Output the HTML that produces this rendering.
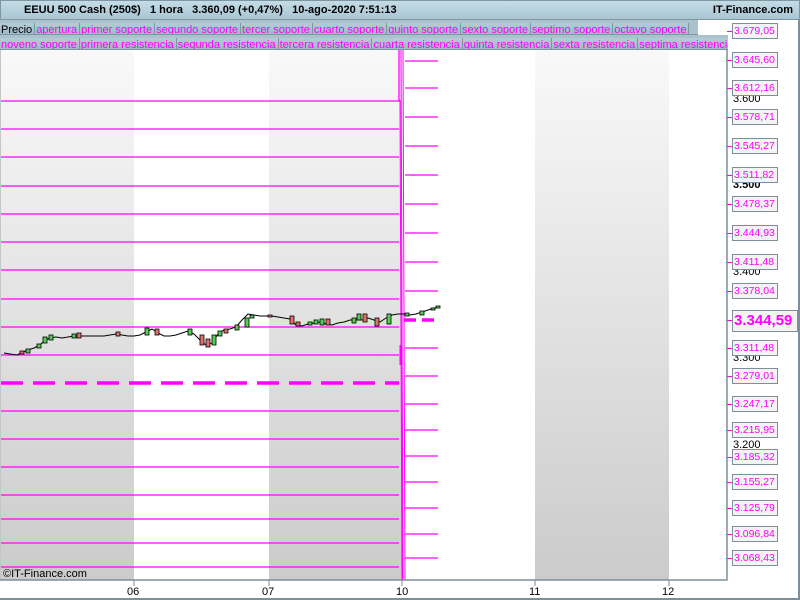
<!DOCTYPE html>
<html><head><meta charset="utf-8"><style>
*{margin:0;padding:0;box-sizing:border-box}
body{width:800px;height:600px;overflow:hidden;background:#fff;font-family:"Liberation Sans",sans-serif;position:relative}
#hdr{position:absolute;left:0;top:0;width:800px;height:20px;background:linear-gradient(#c4dce6,#a9c6d3);border:1px solid #7f96a2;font-size:11px;font-weight:bold;line-height:18px;white-space:pre}
.row{position:absolute;left:0;width:728px;height:15px;background:#a9c2cd;border-bottom:1px solid #7f96a2;white-space:nowrap;overflow:hidden}
.row span{display:inline-block;height:14px;line-height:14px;font-size:11px;color:#f0f;padding:0 2px 0 1px;border-right:1px solid #7f96a2;background:linear-gradient(#b4ccd6,#9ab6c3)}
.lab{position:absolute;left:732px;width:46px;height:16px;border:1px solid #7f8f99;background:#f4f4f4;color:#f0f;font-size:10.5px;line-height:14px;padding-left:1px;white-space:nowrap}
.blk{position:absolute;left:733px;font-size:11px;color:#000;line-height:12px}
.tk{position:absolute;left:727px;width:5px;height:1px;background:#f0f}
.xl{position:absolute;top:586px;font-size:11px;color:#000}
</style></head><body>
<svg width="800" height="600" style="position:absolute;left:0;top:0">
<defs><linearGradient id="g" x1="0" y1="0" x2="0" y2="1"><stop offset="0" stop-color="#f9f9f9"/><stop offset="1" stop-color="#cbcbcb"/></linearGradient></defs>
<rect x="1" y="48" width="133" height="532" fill="url(#g)"/>
<rect x="269" y="48" width="133" height="532" fill="url(#g)"/>
<rect x="535" y="48" width="134" height="532" fill="url(#g)"/>
<g stroke="#f0f" stroke-width="1.3" fill="none">
<path d="M1 101H399V50M1 129H399M1 157H399M1 186H399M1 214H399M1 242H399M1 270H399M1 299H399M1 327H399M1 355H399M1 411H399M1 439H399M1 467H399M1 495H399M1 519H399M1 543H399M1 567H399"/>
<path d="M405 61H438M405 88H438M405 117H438M405 146H438M405 175H438M405 204H438M405 233H438M405 262H438M405 291H438M405 348H438M405 376H438M405 404H438M405 430H438M405 456H438M405 482H438M405 508H438M405 534H438M405 558H438"/>
<path d="M401 50L403 580M403 50L405 580M400 100L402 580" stroke-width="1"/>
</g>
<path d="M1 383H399" stroke="#f0f" stroke-width="3.5" stroke-dasharray="22,10"/>
<path d="M404 320H438" stroke="#f0f" stroke-width="3.5" stroke-dasharray="12,6"/>
<path d="M401 345V365" stroke="#f0f" stroke-width="3"/>
<path d="M0 580H727V48" stroke="#7f8f99" stroke-width="1.5" fill="none"/>
<path d="M0 20V580" stroke="#7f8f99"/>
<g stroke="#7f8f99"><path d="M134 580v6M269 580v6M402 580v6M535 580v6M669 580v6"/></g>
<polyline fill="none" stroke="#000" stroke-width="1" points="4,353 10,354 17,355 23,352 28,350 34,348 40,345 45,340 50,338 56,337 62,338 68,337 74,336 80,336 86,336 92,336 98,336 104,336 110,335 116,334 122,335 128,336 134,336 140,335 146,332 152,329 158,333 164,336 170,336 176,335 182,333 188,331 194,334 200,340 206,345 212,343 218,334 224,330 230,329 236,327 242,320 248,314 254,315 260,316 266,316 272,316 278,317 284,318 290,319 296,325 302,326 308,324 314,323 320,322 326,324 332,325 338,323 344,322 350,320 356,320 362,320 368,318 374,320 380,322 386,318 392,315 398,314 404,314 410,315 416,314 422,312 428,310 434,308 440,307"/>
<g stroke="#000" stroke-width="0.8">
<rect x="20" y="351" width="4" height="3" fill="#e07070"/><rect x="26" y="349" width="4" height="4" fill="#5c5"/><rect x="37" y="344" width="4" height="4" fill="#5c5"/><rect x="43" y="337" width="4" height="6" fill="#5c5"/><rect x="49" y="335" width="4" height="5" fill="#5c5"/><rect x="72" y="334" width="4" height="4" fill="#5c5"/><rect x="77" y="333" width="4" height="5" fill="#e07070"/><rect x="116" y="332" width="4" height="4" fill="#e07070"/><rect x="145" y="328" width="4" height="7" fill="#5c5"/><rect x="155" y="329" width="4" height="6" fill="#e07070"/><rect x="188" y="329" width="4" height="6" fill="#5c5"/><rect x="200" y="335" width="4" height="10" fill="#e07070"/><rect x="206" y="339" width="4" height="8" fill="#e07070"/><rect x="212" y="335" width="4" height="10" fill="#5c5"/><rect x="218" y="331" width="4" height="5" fill="#5c5"/><rect x="224" y="329" width="4" height="4" fill="#e07070"/><rect x="235" y="325" width="4" height="5" fill="#5c5"/><rect x="245" y="318" width="4" height="9" fill="#5c5"/><rect x="250" y="315" width="4" height="3" fill="#5c5"/><rect x="268" y="315" width="4" height="2" fill="#e07070"/><rect x="290" y="316" width="4" height="8" fill="#e07070"/><rect x="296" y="322" width="4" height="4" fill="#e07070"/><rect x="308" y="322" width="4" height="3" fill="#5c5"/><rect x="314" y="320" width="4" height="4" fill="#5c5"/><rect x="320" y="319" width="4" height="6" fill="#5c5"/><rect x="326" y="319" width="4" height="6" fill="#e07070"/><rect x="352" y="318" width="4" height="5" fill="#5c5"/><rect x="357" y="314" width="4" height="6" fill="#5c5"/><rect x="363" y="314" width="4" height="8" fill="#e07070"/><rect x="375" y="318" width="4" height="8" fill="#e07070"/><rect x="387" y="314" width="4" height="10" fill="#5c5"/><rect x="405" y="313" width="4" height="3" fill="#5c5"/><rect x="420" y="311" width="4" height="4" fill="#5c5"/><rect x="431" y="308" width="4" height="2" fill="#5c5"/><rect x="436" y="306" width="4" height="2" fill="#5c5"/>
</g>
<rect x="6" y="8" width="5" height="7" fill="#e06060" stroke="#444" stroke-width=".6"/><rect x="13" y="3" width="5" height="9" fill="#5c5" stroke="#444" stroke-width=".6"/>
</svg>
<div id="hdr"><span style="position:absolute;left:23px">EEUU 500 Cash (250$)   1 hora   3.360,09 (+0,47%)   10-ago-2020 7:51:13</span><span style="position:absolute;right:6px">IT-Finance.com</span></div>
<div class="row" style="top:20px;width:698px"><span style="color:#000">Precio</span><span>apertura</span><span>primer soporte</span><span>segundo soporte</span><span>tercer soporte</span><span>cuarto soporte</span><span>quinto soporte</span><span>sexto soporte</span><span>septimo soporte</span><span>octavo soporte</span></div>
<div class="row" style="top:35px"><span>noveno soporte</span><span>primera resistencia</span><span>segunda resistencia</span><span>tercera resistencia</span><span>cuarta resistencia</span><span>quinta resistencia</span><span>sexta resistencia</span><span>septima resistencia</span></div>
<div style="position:absolute;left:3px;top:568px;font-size:11px">©IT-Finance.com</div>
<div class="blk" style="top:93px">3.600</div><div class="blk" style="top:179px;font-weight:bold">3.500</div><div class="blk" style="top:266px">3.400</div><div class="blk" style="top:352px">3.300</div><div class="blk" style="top:439px">3.200</div>
<div class="tk" style="top:31px"></div><div class="lab" style="top:23px">3.679,05</div>
<div class="tk" style="top:60px"></div><div class="lab" style="top:52px">3.645,60</div>
<div class="tk" style="top:88px"></div><div class="lab" style="top:80px">3.612,16</div>
<div class="tk" style="top:117px"></div><div class="lab" style="top:109px">3.578,71</div>
<div class="tk" style="top:146px"></div><div class="lab" style="top:138px">3.545,27</div>
<div class="tk" style="top:175px"></div><div class="lab" style="top:167px">3.511,82</div>
<div class="tk" style="top:204px"></div><div class="lab" style="top:196px">3.478,37</div>
<div class="tk" style="top:233px"></div><div class="lab" style="top:225px">3.444,93</div>
<div class="tk" style="top:262px"></div><div class="lab" style="top:254px">3.411,48</div>
<div class="tk" style="top:291px"></div><div class="lab" style="top:283px">3.378,04</div>
<div class="tk" style="top:320px"></div><div class="lab" style="top:310px;width:66px;height:22px;font-size:15px;font-weight:bold;line-height:20px">3.344,59</div>
<div class="tk" style="top:348px"></div><div class="lab" style="top:340px">3.311,48</div>
<div class="tk" style="top:376px"></div><div class="lab" style="top:368px">3.279,01</div>
<div class="tk" style="top:404px"></div><div class="lab" style="top:396px">3.247,17</div>
<div class="tk" style="top:430px"></div><div class="lab" style="top:422px">3.215,95</div>
<div class="tk" style="top:457px"></div><div class="lab" style="top:449px">3.185,32</div>
<div class="tk" style="top:482px"></div><div class="lab" style="top:474px">3.155,27</div>
<div class="tk" style="top:508px"></div><div class="lab" style="top:500px">3.125,79</div>
<div class="tk" style="top:534px"></div><div class="lab" style="top:526px">3.096,84</div>
<div class="tk" style="top:558px"></div><div class="lab" style="top:550px">3.068,43</div>
<div class="xl" style="left:127px">06</div><div class="xl" style="left:262px">07</div><div class="xl" style="left:396px">10</div><div class="xl" style="left:529px">11</div><div class="xl" style="left:662px">12</div>
<div style="position:absolute;left:0;top:598px;width:800px;height:2px;background:#7f8f99"></div>
<div style="position:absolute;left:798px;top:20px;width:2px;height:580px;background:#7f8f99"></div>
</body></html>
